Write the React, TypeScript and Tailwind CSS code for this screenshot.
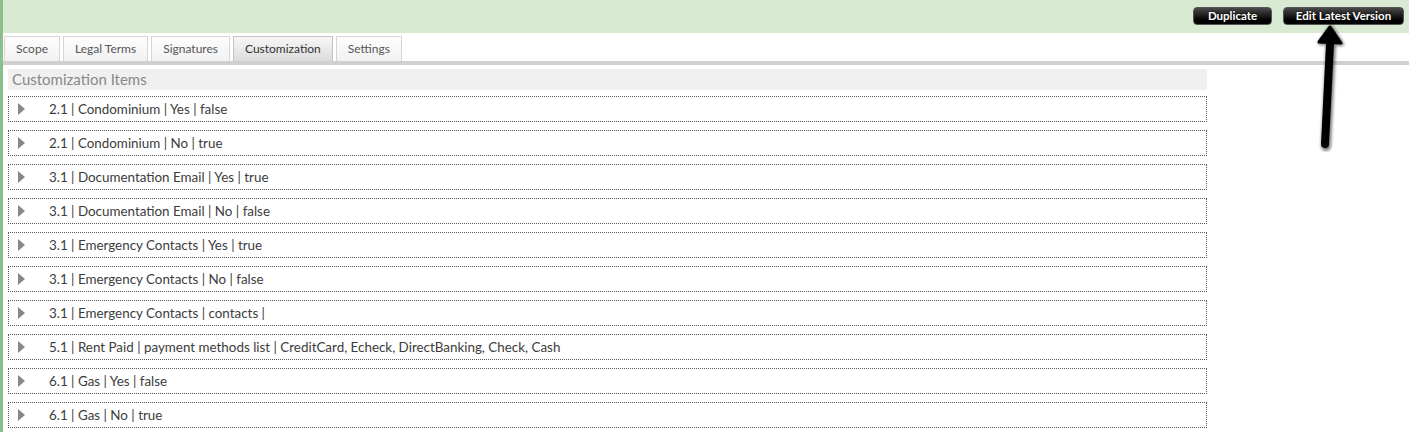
import React from "react";

const TABS = ["Scope", "Legal Terms", "Signatures", "Customization", "Settings"];
const ACTIVE_TAB = "Customization";

const ITEMS = [
  "2.1 | Condominium | Yes | false",
  "2.1 | Condominium | No | true",
  "3.1 | Documentation Email | Yes | true",
  "3.1 | Documentation Email | No | false",
  "3.1 | Emergency Contacts | Yes | true",
  "3.1 | Emergency Contacts | No | false",
  "3.1 | Emergency Contacts | contacts |",
  "5.1 | Rent Paid | payment methods list | CreditCard, Echeck, DirectBanking, Check, Cash",
  "6.1 | Gas | Yes | false",
  "6.1 | Gas | No | true",
];

function DarkButton({ label, width }: { label: string; width: string }) {
  return (
    <button
      type="button"
      className={`flex h-[18px] ${width} items-center justify-center rounded-[4px] border border-[#555] bg-gradient-to-b from-[#4a4a4a] via-[#1a1a1a] to-[#000] text-[11.5px] font-bold text-white [text-shadow:0_0_2px_#000]`}
    >
      {label}
    </button>
  );
}

function Arrow() {
  return (
    <svg
      className="pointer-events-none absolute left-[1310px] top-[22px]"
      width="36"
      height="130"
      viewBox="0 0 36 130"
    >
      <defs>
        <filter id="sh" x="-50%" y="-10%" width="200%" height="120%">
          <feGaussianBlur stdDeviation="1.5" />
        </filter>
      </defs>
      <g filter="url(#sh)" opacity="0.5">
        <path d="M13 124 L18 22" stroke="#000" strokeWidth="10" strokeLinecap="round" />
        <path d="M18 5 L29 22 L7 21 Z" fill="#000" stroke="#000" strokeWidth="4" strokeLinejoin="round" />
      </g>
      <path d="M12 122 L17 22" stroke="#000" strokeWidth="8" strokeLinecap="round" />
      <path d="M17 5 L28 21 L6 20 Z" fill="#000" stroke="#000" strokeWidth="3" strokeLinejoin="round" />
    </svg>
  );
}

export default function App() {
  return (
    <div className="relative h-[432px] w-[1409px] overflow-hidden border-l-[3px] border-[#8cbf8a] bg-white font-['Lato','Noto_Sans',sans-serif]">
      <header className="flex h-[33px] items-start justify-end gap-[11px] bg-[#d9ead3] pr-[5px] pt-[7px]">
        <DarkButton label="Duplicate" width="w-[79px]" />
        <DarkButton label="Edit Latest Version" width="w-[121px]" />
      </header>

      <nav className="mt-[3px] flex gap-[3px] pl-[1px]">
        {TABS.map((t) => (
          <div
            key={t}
            className={`flex h-[25px] items-center border border-b-0 px-[11px] text-[12px] ${
              t === ACTIVE_TAB
                ? "border-[#c4c4c4] bg-gradient-to-b from-[#f7f7f7] to-[#dcdcdc] text-[#333]"
                : "border-[#d6d6d6] bg-gradient-to-b from-[#fdfdfd] to-[#f2f2f2] text-[#555]"
            }`}
          >
            {t}
          </div>
        ))}
      </nav>
      <div className="h-[4px] bg-[#d0d0d0]" />

      <main className="w-[1204px] pl-[5px] pt-[4px]">
        <h2 className="h-[21px] bg-[#f0f0f0] pl-[4px] text-[15px] leading-[21px] text-[#888]">
          Customization Items
        </h2>
        <ul className="mt-[6px] flex flex-col gap-[8px]">
          {ITEMS.map((item) => (
            <li
              key={item}
              className="flex h-[26px] items-center border border-dotted border-[#555] text-[13.4px] text-[#3c3c3c]"
            >
              <span className="ml-[9px] mr-[24px] h-0 w-0 border-y-[6px] border-l-[7px] border-y-transparent border-l-[#888]" />
              <span>{item}</span>
            </li>
          ))}
        </ul>
      </main>

      <Arrow />
    </div>
  );
}
